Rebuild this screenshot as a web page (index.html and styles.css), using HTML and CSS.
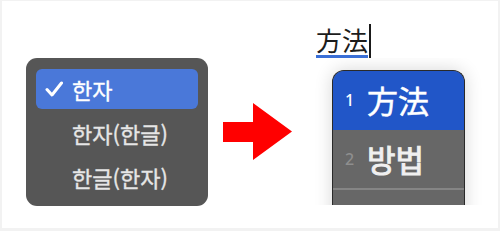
FILE: index.html
```html
<!DOCTYPE html>
<html lang="ko">
<head>
<meta charset="utf-8">
<title>한자 변환</title>
<link rel="stylesheet" href="styles.css">
</head>
<body>
<div class="frame">
  <div class="menu">
    <div class="item selected">
      <svg class="check" width="18" height="16" viewBox="0 0 18 16"><path d="M2 8.5 L7 14 L16.5 2" fill="none" stroke="#ffffff" stroke-width="3" stroke-linecap="round" stroke-linejoin="round"/></svg>
      <span>한자</span>
    </div>
    <div class="item plain">한자(한글)</div>
    <div class="item plain">한글(한자)</div>
  </div>
  <svg class="arrow" width="70" height="60" viewBox="0 0 70 60"><polygon points="0,20 30,20 30,1 69,29.5 30,58 30,40 0,40" fill="#ff0000"/></svg>
  <div class="right">
    <div class="line">
      <span class="comp">方法</span>
      <span class="cursor"></span>
    </div>
    <div class="clip">
      <div class="window">
        <div class="cand first"><span class="num">1</span><span class="word">方法</span></div>
        <div class="cand second"><span class="num">2</span><span class="word">방법</span></div>
        <div class="sep"></div>
      </div>
    </div>
  </div>
</div>
</body>
</html>
```
FILE: styles.css
```css
html, body {
  margin: 0;
  padding: 0;
  background: #ffffff;
}
.frame {
  width: 500px;
  height: 231px;
  box-sizing: border-box;
  border-style: solid;
  border-color: #f2f2f2;
  border-width: 1px 2px 3px 2px;
  display: flex;
  align-items: flex-start;
  overflow: hidden;
  font-family: "Noto Sans CJK KR", "Noto Sans", sans-serif;
}
.menu {
  margin-left: 24px;
  margin-top: 57px;
  width: 182px;
  height: 148px;
  box-sizing: border-box;
  padding: 11px 10px;
  background: #565656;
  border-radius: 11px;
  display: flex;
  flex-direction: column;
  gap: 4px;
  flex-shrink: 0;
}
.item {
  height: 40px;
  line-height: 40px;
  font-size: 22px;
  font-weight: 400;
  -webkit-text-stroke: 0.35px currentColor;
  color: #e6e6e6;
  display: flex;
  align-items: center;
}
.item.selected {
  height: 42px;
  background: #4a78d9;
  border-radius: 6px;
  color: #ffffff;
  padding-left: 9px;
}
.check {
  margin-right: 9px;
  margin-top: -1px;
}
.item.plain {
  padding-left: 36px;
}
.arrow {
  margin-left: 15px;
  margin-top: 101px;
  flex-shrink: 0;
}
.right {
  margin-left: 19px;
  margin-top: 23px;
  display: flex;
  flex-direction: column;
}
.line {
  display: flex;
  padding-left: 4px;
  height: 34px;
}
.comp {
  font-family: "Noto Sans CJK SC", sans-serif;
  font-size: 26px;
  line-height: 31px;
  height: 34px;
  box-sizing: border-box;
  color: #1c1c1c;
  border-bottom: 3px solid #3a6fd6;
}
.cursor {
  width: 2px;
  height: 34px;
  margin-left: 1px;
  background: #1a1a1a;
}
.clip {
  width: 180px;
  height: 147px;
  box-sizing: border-box;
  padding: 12px 0 0 20px;
  overflow: hidden;
}
.window {
  width: 133px;
  height: 160px;
  box-sizing: border-box;
  border: 1.5px solid #2a2a2a;
  border-bottom: none;
  border-radius: 12px 12px 0 0;
  background: #676767;
  overflow: hidden;
  box-shadow: 0 0 18px rgba(0, 0, 0, 0.16);
}
.cand {
  display: flex;
  align-items: center;
  padding-left: 12px;
}
.cand.first {
  height: 58.5px;
  background: #2156c8;
}
.cand.second {
  height: 58px;
}
.num {
  width: 22px;
  font-family: "Noto Sans", sans-serif;
  font-size: 16px;
  font-weight: 500;
  color: #ffffff;
}
.second .num {
  color: #8e8e8e;
}
.word {
  font-family: "Noto Sans CJK SC", "Noto Sans CJK KR", sans-serif;
  font-size: 31px;
  font-weight: 400;
  -webkit-text-stroke: 0.5px currentColor;
  line-height: 40px;
  color: #ffffff;
}
.second .word {
  font-family: "Noto Sans CJK KR", sans-serif;
  -webkit-text-stroke: 1px currentColor;
  color: #f0f0f0;
}
.sep {
  height: 2px;
  background: #858585;
}
```
